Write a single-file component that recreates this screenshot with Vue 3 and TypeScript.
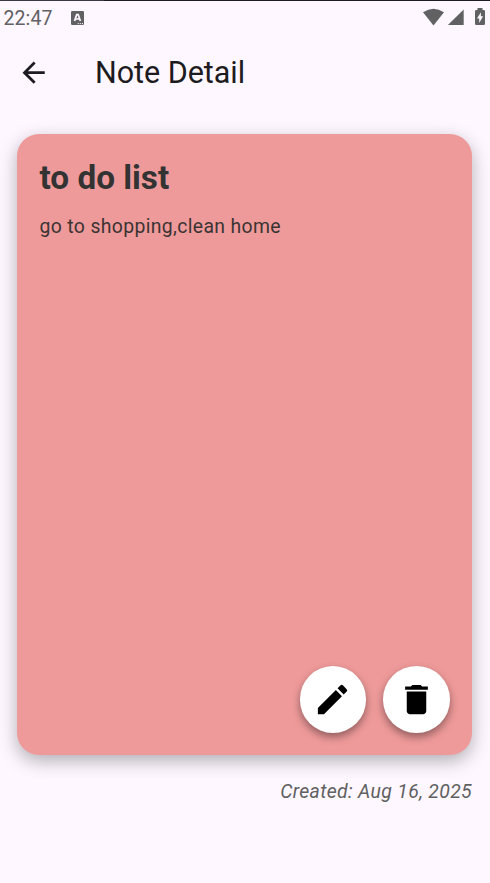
<script setup lang="ts">
interface Note {
  title: string
  body: string
  created: string
}

const note: Note = {
  title: 'to do list',
  body: 'go to shopping,clean home',
  created: 'Aug 16, 2025',
}
</script>

<template>
  <div class="screen">
    <div class="status">
      <span class="clock">22:47</span>
      <svg class="keyboard" viewBox="0 0 13 14">
        <rect width="13" height="14" rx="1.2" fill="#616063" />
        <path d="M3.5 10 5.7 3.7h1.5L9.4 10M4.7 8h3.6" fill="none" stroke="#fef7ff" stroke-width="1.7" />
        <path d="M6.7 12.6h1.1M8.8 12.6h1.1M10.9 12.6h1.1" stroke="#fef7ff" stroke-width="1" />
      </svg>
      <svg class="signals" viewBox="0 0 64 20">
        <g fill="#616063">
          <path d="M0 4.3Q10.5-2.9 21 4.3L10.5 17.4Z" />
          <path d="M40.7 1.4V17H24.9Z" />
          <path d="M54.5 .1h5v2h1.2q1.3 0 1.3 1.3v12.4q0 1.2-1.3 1.2h-7.4q-1.3 0-1.3-1.2V3.4q0-1.3 1.3-1.3h1.2Z" />
        </g>
        <path d="M57.9 4.2v4h2.2l-3.9 6.8v-4.6h-2.2Z" fill="#fef7ff" />
      </svg>
    </div>

    <header class="bar">
      <button class="back" aria-label="Back">
        <svg viewBox="0 0 24 24"><path d="M7.825 13l5.6 5.6L12 20l-8-8 8-8 1.425 1.4-5.6 5.6H20v2z" /></svg>
      </button>
      <h1>Note Detail</h1>
    </header>

    <main class="card">
      <h2>{{ note.title }}</h2>
      <p>{{ note.body }}</p>
      <div class="actions">
        <button aria-label="Edit">
          <svg viewBox="0 0 24 24"><path d="M3 17.25V21h3.75L17.81 9.94l-3.75-3.75L3 17.25zM20.71 7.04a1 1 0 0 0 0-1.41l-2.34-2.34a1 1 0 0 0-1.41 0l-1.83 1.83 3.75 3.75 1.83-1.83z" /></svg>
        </button>
        <button aria-label="Delete">
          <svg viewBox="0 0 24 24"><path d="M6 19c0 1.1.9 2 2 2h8c1.1 0 2-.9 2-2V7H6v12zM19 4h-3.5l-1-1h-5l-1 1H5v2h14V4z" /></svg>
        </button>
      </div>
    </main>

    <footer class="created">Created: {{ note.created }}</footer>
  </div>
</template>

<style>
body {
  background: #fef7ff;
}
</style>

<style scoped>
.screen {
  box-sizing: border-box;
  width: 490px;
  height: 883px;
  overflow: hidden;
  display: flex;
  flex-direction: column;
  padding-top: 1px;
  background: linear-gradient(90deg, #3a3844 104px, #1d1b26 104px) top / 100% 1px no-repeat #fef7ff;
  font-family: Roboto, sans-serif;
}
.status {
  display: flex;
  align-items: center;
  height: 34px;
  padding: 0 3px 0 3.5px;
  color: #616063;
}
.clock {
  width: 67.5px;
  padding-top: 2px;
  font-size: 19.5px;
  line-height: 32px;
  letter-spacing: 0.1px;
}
.keyboard {
  width: 13px;
  height: 14px;
}
.signals {
  width: 64px;
  height: 20px;
  margin-left: auto;
  margin-top: 0;
}
.bar {
  display: flex;
  align-items: center;
  height: 76px;
  padding-left: 17px;
}
button {
  display: flex;
  align-items: center;
  justify-content: center;
  padding: 0;
  border: 0;
  background: none;
}
.back {
  width: 34px;
  height: 34px;
}
.back svg {
  width: 33.3px;
  height: 33.3px;
  fill: #1d1b20;
}
h1 {
  margin: 0 0 0 44px;
  font-size: 30.5px;
  font-weight: 400;
  line-height: 38px;
  letter-spacing: -0.03px;
  color: #1d1b20;
}
.card {
  box-sizing: border-box;
  display: flex;
  flex-direction: column;
  width: 455px;
  height: 621px;
  margin: 23px 0 0 17px;
  padding: 22px 22.5px;
  border-radius: 22px;
  background: #ef9a9a;
  box-shadow: 0 6px 18px rgba(0, 0, 0, 0.3);
}
h2 {
  margin: 0;
  font-size: 33.3px;
  font-weight: 700;
  line-height: 44px;
  color: #333;
}
p {
  margin: 13px 0 0;
  font-size: 19.4px;
  line-height: 28px;
  letter-spacing: 0.35px;
  color: #3b3434;
}
.actions {
  display: flex;
  justify-content: flex-end;
  gap: 16.5px;
  margin-top: auto;
}
.actions button {
  width: 66.7px;
  height: 66.7px;
  border-radius: 50%;
  background: #fff;
  box-shadow: 0 4px 8px rgba(0, 0, 0, 0.4);
}
.actions svg {
  width: 39px;
  height: 39px;
}
.created {
  margin: 23px 18px 0 0;
  text-align: right;
  font-size: 19.4px;
  font-style: italic;
  line-height: 28px;
  letter-spacing: 0.35px;
  color: #616161;
}
</style>
